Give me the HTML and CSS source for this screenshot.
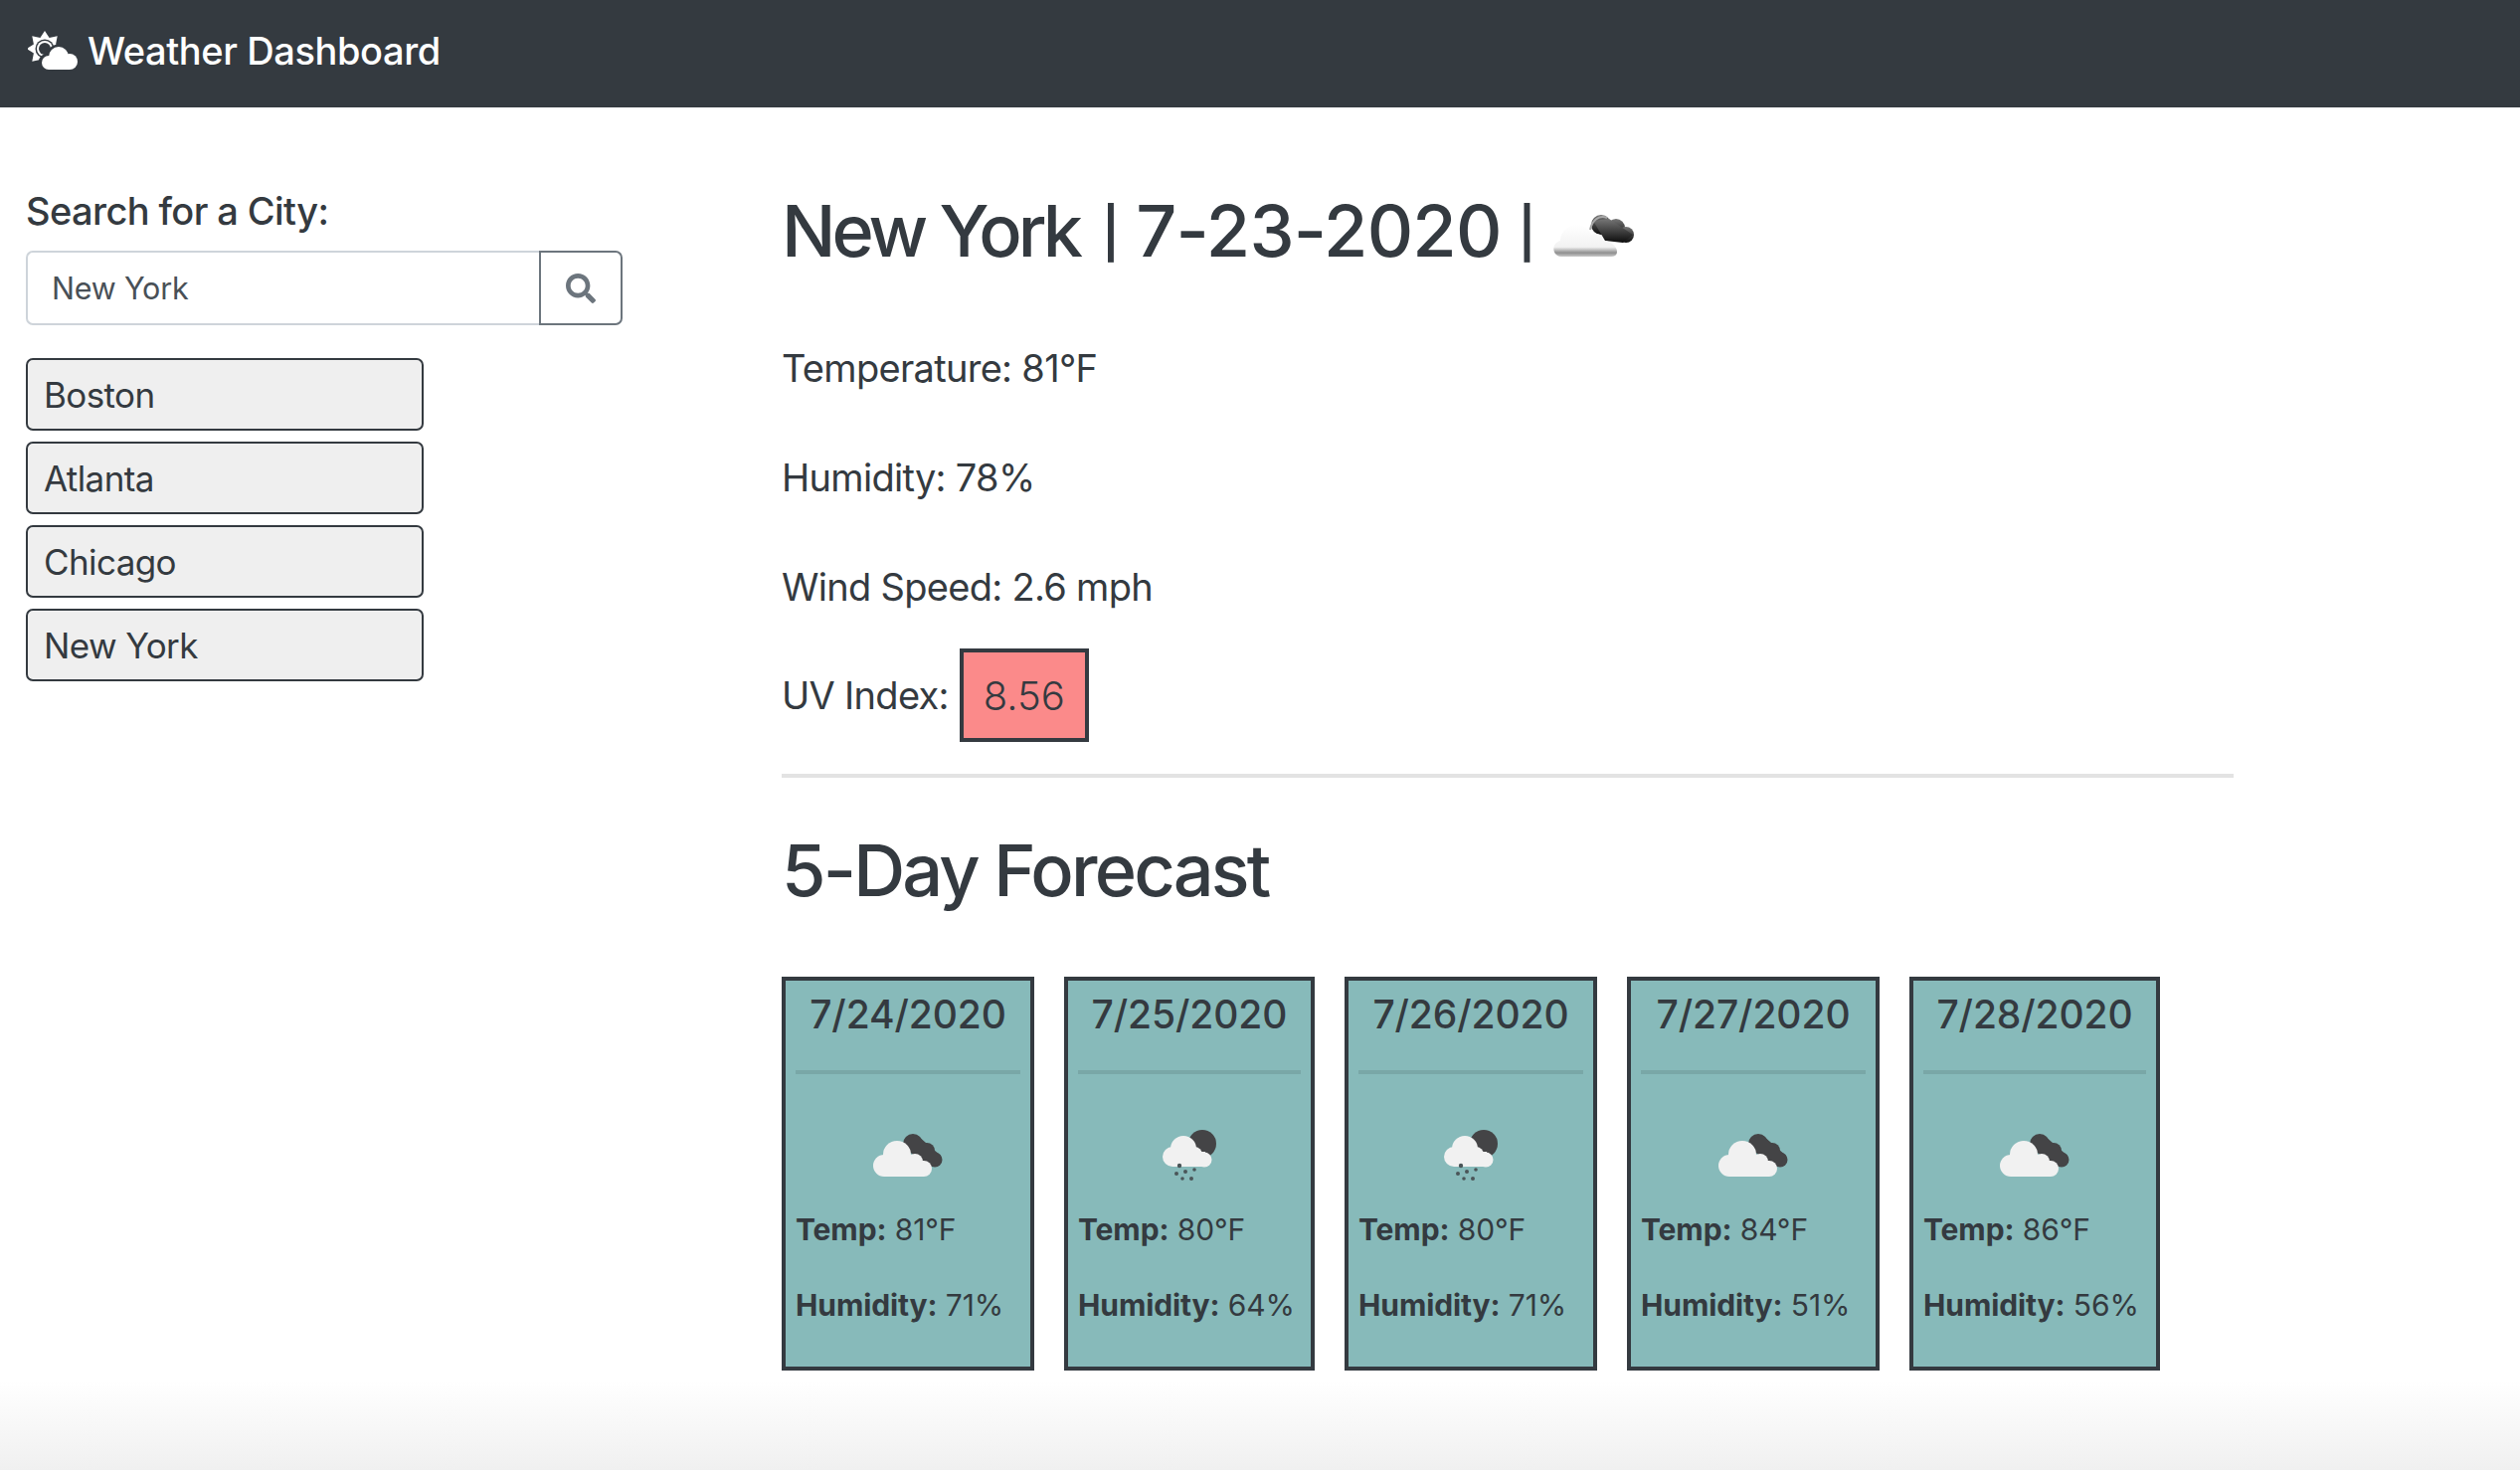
FILE: index.html
```html
<!DOCTYPE html>
<html lang="en">
<head>
    <meta charset="UTF-8">
    <meta name="viewport" content="width=device-width, initial-scale=1.0">
    <title>Weather Dashboard</title>
    <link rel="stylesheet" href="styles.css">
</head>
<body>
    <svg class="defs" width="0" height="0" aria-hidden="true">
        <defs>
            <symbol id="clouds" viewBox="0 0 100 100">
                <g fill="#444446">
                    <circle cx="55" cy="38" r="10"/>
                    <circle cx="69" cy="45" r="8"/>
                    <circle cx="77" cy="54" r="7.5"/>
                    <path d="M47 33 L60 30 L83 50 L75 61 L60 60 Z"/>
                </g>
                <g fill="#f1f1f1">
                    <circle cx="39" cy="49" r="14"/>
                    <circle cx="26" cy="60" r="11"/>
                    <circle cx="57" cy="56" r="8"/>
                    <circle cx="66" cy="63" r="8"/>
                    <path d="M26 49 H57 V55 H66 V71 H26 Z"/>
                </g>
            </symbol>
            <symbol id="rain" viewBox="0 0 100 100">
                <circle cx="63" cy="38" r="14" fill="#444446"/>
                <g fill="#f1f1f1">
                    <circle cx="44" cy="43" r="13"/>
                    <circle cx="33" cy="51" r="10"/>
                    <circle cx="55" cy="49" r="8"/>
                    <circle cx="65" cy="54" r="7.5"/>
                    <path d="M33 46 H66 V61 H33 Z"/>
                </g>
                <g fill="#4a5558">
                    <circle cx="40" cy="60" r="2.2"/>
                    <circle cx="37" cy="68" r="2"/>
                    <circle cx="46" cy="66" r="2"/>
                    <circle cx="55" cy="64" r="1.8"/>
                    <circle cx="43" cy="73" r="1.8"/>
                    <circle cx="52" cy="73" r="2"/>
                </g>
            </symbol>
            <linearGradient id="cloud-light" x1="0" y1="0" x2="0" y2="1">
                <stop offset="0" stop-color="#ffffff"/>
                <stop offset="0.7" stop-color="#f2f2f2"/>
                <stop offset="0.88" stop-color="#8f8f8f"/>
                <stop offset="1" stop-color="#c9c9c9"/>
            </linearGradient>
            <linearGradient id="cloud-dark" x1="0" y1="0" x2="0" y2="1">
                <stop offset="0" stop-color="#777777"/>
                <stop offset="1" stop-color="#0c0c0c"/>
            </linearGradient>
        </defs>
    </svg>

    <header class="navbar">
        <svg class="brand-icon" viewBox="28 30 50 42">
            <polygon fill="#fff" points="45,31 49.600,37.900 57.700,36.300 56.100,44.400 63,49 56.100,53.600 57.700,61.700 49.600,60.100 45,67 40.400,60.100 32.300,61.700 33.900,53.600 27,49 33.900,44.400 32.300,36.300 40.400,37.900"/>
            <circle cx="45" cy="49" r="9.500" fill="#343a40"/>
            <circle cx="45" cy="49" r="8" fill="#fff"/>
            <circle cx="45" cy="49" r="6" fill="#343a40"/>
            <g fill="#343a40" stroke="#343a40" stroke-width="5">
                <circle cx="59" cy="57" r="10"/>
                <circle cx="48" cy="63" r="7"/>
                <circle cx="70" cy="62" r="8"/>
            </g>
            <g fill="#fff">
                <circle cx="59" cy="57" r="10"/>
                <circle cx="49" cy="63" r="7"/>
                <circle cx="70" cy="62" r="8"/>
                <rect x="49" y="58" width="21" height="12"/>
            </g>
        </svg>
        <span class="brand-name">Weather Dashboard</span>
    </header>

    <div class="layout">
        <aside class="sidebar">
            <label class="search-label" for="city">Search for a City:</label>
            <div class="search-group">
                <input class="search-input" id="city" type="text" value="New York">
                <button class="search-btn" type="button" aria-label="Search">
                    <svg viewBox="0 0 512 512" width="30" height="30" fill="#6c757d">
                        <path d="M505 442.700L405.300 343c-4.500-4.500-10.600-7-17-7H372c27.600-35.300 44-79.700 44-128C416 93.100 322.900 0 208 0S0 93.100 0 208s93.100 208 208 208c48.300 0 92.700-16.400 128-44v16.300c0 6.400 2.500 12.500 7 17l99.700 99.700c9.400 9.400 24.600 9.400 33.900 0l28.300-28.300c9.400-9.400 9.400-24.600.1-34zM208 336c-70.700 0-128-57.200-128-128 0-70.700 57.200-128 128-128 70.700 0 128 57.200 128 128 0 70.700-57.200 128-128 128z"/>
                    </svg>
                </button>
            </div>
            <button class="city-btn" type="button">Boston</button>
            <button class="city-btn" type="button">Atlanta</button>
            <button class="city-btn" type="button">Chicago</button>
            <button class="city-btn" type="button">New York</button>
        </aside>

        <main class="content">
            <h1 class="today-title">
                <span class="today-city">New York</span>
                <span class="today-sep">|</span>
                <span>7-23-2020</span>
                <span class="today-sep">|</span>
                <svg class="today-icon" viewBox="0 0 90 50">
                    <g fill="url(#cloud-dark)">
                        <circle cx="52" cy="14" r="10"/>
                        <circle cx="67" cy="17" r="9"/>
                        <circle cx="77" cy="24" r="8"/>
                        <path d="M44 10 L60 8 L84 24 L74 32 L56 30 Z"/>
                    </g>
                    <path d="M41 19 C43 9 50 4 58 7" fill="none" stroke="#a8a8a8" stroke-width="2"/>
                    <path fill="url(#cloud-light)" d="M12 46 C3 46 1 33 11 30 C11 20 20 15 26 14 C33 13 40 18 42 24 C48 21 54 25 54 30 C62 30 68 36 68 41 C68 44 66 46 62 46 Z"/>
                </svg>
            </h1>
            <p class="stat">Temperature: 81°F</p>
            <p class="stat">Humidity: 78%</p>
            <p class="stat">Wind Speed: 2.6 mph</p>
            <div class="uv-row">
                <span>UV Index:</span>
                <span class="uv-badge">8.56</span>
            </div>
            <hr class="divider">
            <h2 class="forecast-title">5-Day Forecast</h2>
            <div class="forecast">
                <div class="day-card">
                    <h3 class="day-date">7/24/2020</h3>
                    <hr class="day-rule">
                    <svg class="day-icon"><use href="#clouds"/></svg>
                    <p class="day-line"><strong>Temp:</strong> 81°F</p>
                    <p class="day-line"><strong>Humidity:</strong> 71%</p>
                </div>
                <div class="day-card narrow">
                    <h3 class="day-date">7/25/2020</h3>
                    <hr class="day-rule">
                    <svg class="day-icon"><use href="#rain"/></svg>
                    <p class="day-line"><strong>Temp:</strong> 80°F</p>
                    <p class="day-line"><strong>Humidity:</strong> 64%</p>
                </div>
                <div class="day-card">
                    <h3 class="day-date">7/26/2020</h3>
                    <hr class="day-rule">
                    <svg class="day-icon"><use href="#rain"/></svg>
                    <p class="day-line"><strong>Temp:</strong> 80°F</p>
                    <p class="day-line"><strong>Humidity:</strong> 71%</p>
                </div>
                <div class="day-card">
                    <h3 class="day-date">7/27/2020</h3>
                    <hr class="day-rule">
                    <svg class="day-icon"><use href="#clouds"/></svg>
                    <p class="day-line"><strong>Temp:</strong> 84°F</p>
                    <p class="day-line"><strong>Humidity:</strong> 51%</p>
                </div>
                <div class="day-card narrow">
                    <h3 class="day-date">7/28/2020</h3>
                    <hr class="day-rule">
                    <svg class="day-icon"><use href="#clouds"/></svg>
                    <p class="day-line"><strong>Temp:</strong> 86°F</p>
                    <p class="day-line"><strong>Humidity:</strong> 56%</p>
                </div>
            </div>
        </main>
    </div>
</body>
</html>
```

FILE: styles.css
```css
* {
    box-sizing: border-box;
}
html, body {
    height: 100%;
}
body {
    margin: 0;
    font-family: Inter, "Noto Sans", sans-serif;
    font-size: 38px;
    letter-spacing: -0.7px;
    color: #343a40;
    background: linear-gradient(to bottom, #fff, #f0f0f0) bottom / 100% 90px no-repeat #fff;
    overflow: hidden;
}
.defs {
    display: block;
    height: 0;
}
.navbar {
    height: 108px;
    background-color: #343a40;
    display: flex;
    align-items: center;
    padding-left: 28px;
    gap: 10px;
    color: white;
}
.brand-icon {
    width: 50px;
    height: 42px;
    margin-top: -6px;
}
.brand-name {
    font-size: 38px;
    font-weight: 500;
    letter-spacing: -0.4px;
    margin-top: -6px;
}
.layout {
    display: flex;
}
.sidebar {
    width: 786px;
    padding: 76px 0 0 26px;
}
.search-label {
    display: block;
    font-weight: 500;
    letter-spacing: -0.6px;
    line-height: 56px;
    margin-bottom: 12px;
}
.search-group {
    display: flex;
    width: 600px;
    height: 75px;
    margin-bottom: 33px;
}
.search-input {
    flex: 1;
    min-width: 0;
    font: inherit;
    font-size: 30.5px;
    letter-spacing: -0.2px;
    color: #495057;
    border: 2px solid #ced4da;
    border-right: 0;
    border-radius: 7px 0 0 7px;
    padding: 0 24px;
}
.search-btn {
    width: 84px;
    background: white;
    border: 2px solid #6c757d;
    border-radius: 0 7px 7px 0;
    display: flex;
    align-items: center;
    justify-content: center;
    padding: 0;
}
.city-btn {
    display: block;
    width: 400px;
    height: 73px;
    margin-bottom: 11px;
    padding: 0 0 0 16px;
    font: inherit;
    font-size: 35px;
    letter-spacing: -0.6px;
    color: #343a40;
    text-align: left;
    background-color: #efefef;
    border: 2px solid #343a40;
    border-radius: 7px;
}
.content {
    width: 1460px;
    padding-top: 81px;
}
.today-title {
    display: flex;
    align-items: flex-start;
    gap: 17px;
    height: 86px;
    margin: 0 0 67px;
    font-size: 72px;
    font-weight: 500;
    letter-spacing: -0.8px;
    line-height: 86px;
}
.today-city {
    letter-spacing: -4px;
    margin-right: 6px;
}
.today-sep {
    font-size: 50px;
    font-weight: 600;
    line-height: 90px;
}
.today-icon {
    width: 90px;
    height: 50px;
    margin: 23px 0 0 -3px;
}
.stat {
    margin: 0 0 54px;
    line-height: 56px;
}
.uv-row {
    display: flex;
    align-items: center;
    gap: 11px;
    margin-top: -20px;
}
.uv-badge {
    width: 130px;
    height: 94px;
    display: flex;
    align-items: center;
    justify-content: center;
    font-size: 40px;
    font-weight: 300;
    letter-spacing: 0;
    background-color: #fb8a8a;
    border: 4px solid #343a40;
}
.divider {
    width: 1460px;
    height: 4px;
    margin: 32px 0 50px;
    border: 0;
    background-color: #e3e3e3;
}
.forecast-title {
    margin: 0 0 64px;
    font-size: 72px;
    font-weight: 500;
    letter-spacing: -2.8px;
    line-height: 86px;
}
.forecast {
    display: flex;
    gap: 30px;
}
.day-card {
    width: 254px;
    height: 396px;
    padding: 10px 10px 0;
    background-color: #87baba;
    border: 4px solid #343a40;
}
.day-card.narrow {
    width: 252px;
}
.day-date {
    margin: 0;
    font-size: 39px;
    font-weight: 500;
    letter-spacing: -0.1px;
    line-height: 48px;
    text-align: center;
}
.day-rule {
    height: 4px;
    margin: 32px 0 0;
    border: 0;
    background-color: rgba(0, 0, 0, 0.1);
}
.day-icon {
    display: block;
    width: 100px;
    height: 100px;
    margin: 32px auto 2px;
}
.day-line {
    margin: 0 0 31px;
    font-size: 30px;
    letter-spacing: -0.1px;
    line-height: 45px;
    white-space: nowrap;
}
```
